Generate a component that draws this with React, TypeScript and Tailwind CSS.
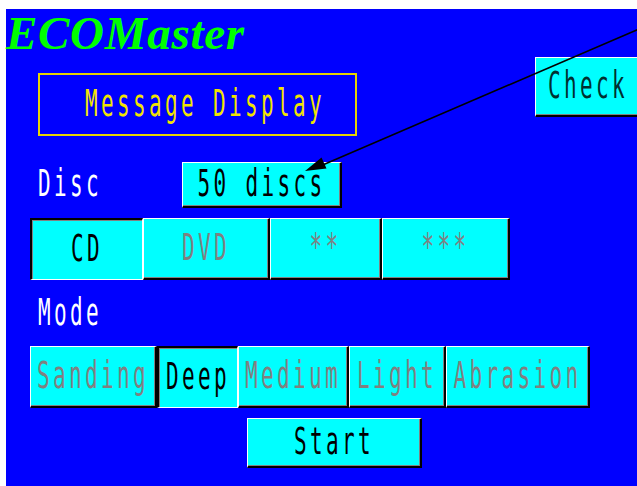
import React from 'react';

const mono = "font-['DejaVu_Sans_Mono','Liberation_Mono',monospace]";

const Txt = ({ children, className = '' }: { children: React.ReactNode; className?: string }) => (
  <span
    className={`inline-block whitespace-pre ${mono} text-[21px] leading-none tracking-[3.35px] scale-y-[1.75] ${className}`}
  >
    {children}
  </span>
);

type BtnProps = {
  label: string;
  w: string;
  h?: string;
  pressed?: boolean;
  dim?: boolean;
  extra?: string;
};

const raised =
  'border-t border-l border-t-white border-l-white border-r-2 border-b-2 border-r-black border-b-black shadow-[inset_-1px_-1px_0_#808080]';
const sunk =
  'border-t-2 border-l-2 border-t-black border-l-black border-r border-b border-r-white border-b-white shadow-[inset_1px_1px_0_#808080]';

const Btn = ({ label, w, h = 'h-[62px]', pressed, dim, extra = '' }: BtnProps) => (
  <div
    className={`${w} ${h} shrink-0 bg-[#00ffff] flex items-center justify-center ${pressed ? sunk : raised} ${extra}`}
  >
    <Txt className={dim ? 'text-[#808080]' : 'text-black'}>{label}</Txt>
  </div>
);

export default function App() {
  return (
    <div className="w-[637px] h-[486px] bg-white overflow-hidden">
      <div className="ml-[6px] mt-[9px] w-[631px] h-[477px] bg-[#0000ff] relative">
        {/* title */}
        <div className="h-[48px] pr-[4px]">
          <span className="inline-block pr-[6px] font-['Liberation_Serif',serif] italic font-bold text-[47px] leading-[48px] tracking-[0.7px] text-[#00ff00] whitespace-nowrap">
            ECOMaster
          </span>
        </div>

        {/* message + check */}
        <div className="flex items-start h-[79px]">
          <div className="shrink-0 ml-[32px] mt-[16px] w-[319px] h-[63px] border-2 border-[#e6d400] flex items-center pl-[45px]">
            <Txt className="text-[#f2e400]">Message Display</Txt>
          </div>
          <div className={`ml-[178px] w-[110px] h-[60px] shrink-0 bg-[#00ffff] flex items-center pl-[12px] ${raised}`}>
            <Txt className="text-[#003030]">Check</Txt>
          </div>
        </div>

        {/* disc */}
        <div className="mt-[26px] flex items-center h-[46px]">
          <div className="ml-[32px] w-[144px]">
            <Txt className="text-white">Disc</Txt>
          </div>
          <Btn label="50 discs" w="w-[160px]" h="h-[46px]" />
        </div>

        <div className="mt-[10px] ml-[24px] flex">
          <Btn label="CD" w="w-[113px]" pressed />
          <Btn label="DVD" w="w-[127px]" dim />
          <Btn label="**" w="w-[112px]" dim />
          <Btn label="***" w="w-[128px]" dim />
        </div>

        {/* mode */}
        <div className="h-[66px] flex items-center pl-[32px]">
          <Txt className="text-white">Mode</Txt>
        </div>
        <div className="ml-[24px] flex">
          <Btn label="Sanding" w="w-[127px]" dim />
          <Btn label="Deep" w="w-[81px]" pressed />
          <Btn label="Medium" w="w-[111px]" dim />
          <Btn label="Light" w="w-[97px]" dim />
          <Btn label="Abrasion" w="w-[144px]" dim />
        </div>

        <div className="mt-[10px] ml-[241px]">
          <Btn label="Start" w="w-[175px]" h="h-[50px]" />
        </div>

        {/* callout arrow */}
        <svg className="absolute left-0 top-0 pointer-events-none" width="631" height="477" viewBox="0 0 631 477">
          <line x1="640" y1="17" x2="312" y2="158" stroke="#000" strokeWidth="1.6" />
          <polygon points="299,162 315.5,148.5 320.5,159.5" fill="#000" />
        </svg>
      </div>
    </div>
  );
}
